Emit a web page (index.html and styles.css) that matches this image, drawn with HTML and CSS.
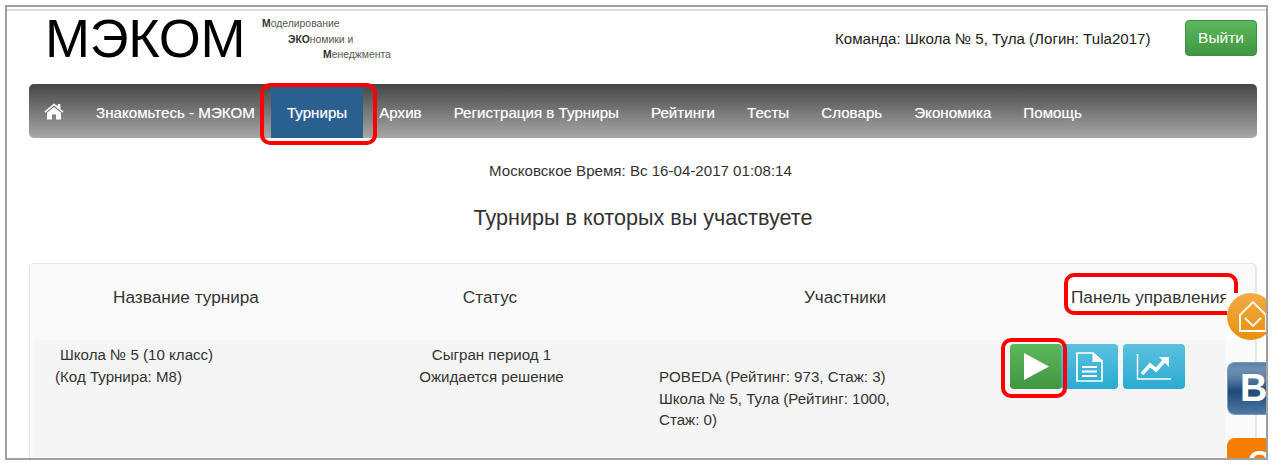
FILE: index.html
```html
<!DOCTYPE html>
<html lang="ru">
<head>
<meta charset="utf-8">
<title>МЭКОМ — Турниры</title>
<link rel="stylesheet" href="styles.css">
</head>
<body>
<div class="frame">
  <div class="page">
    <header class="top">
      <div class="logo">МЭКОМ</div>
      <div class="tagline">
        <div class="tag1"><b>М</b>оделирование</div>
        <div class="tag2"><b>ЭКО</b>номики и</div>
        <div class="tag3"><b>М</b>енеджмента</div>
      </div>
      <div class="team">Команда: Школа № 5, Тула (Логин: Tula2017)</div>
      <a class="logout">Выйти</a>
    </header>
    <nav class="nav">
      <a class="home" aria-label="Главная">
        <svg width="20" height="18" viewBox="0 0 20 18"><path fill="#fff" d="M10 1.500 0.400 9.600l1 1.200L10 3.600l8.600 7.200 1-1.200-3.200-2.700V2h-2.600v2.200z"/><path fill="#fff" d="M10 5 3 10.800V17.400h5v-5h4v5h5V10.800z"/></svg>
      </a>
      <a class="item">Знакомьтесь - МЭКОМ</a>
      <a class="item active">Турниры</a>
      <a class="item">Архив</a>
      <a class="item">Регистрация в Турниры</a>
      <a class="item">Рейтинги</a>
      <a class="item">Тесты</a>
      <a class="item">Словарь</a>
      <a class="item">Экономика</a>
      <a class="item">Помощь</a>
    </nav>
    <p class="clock">Московское Время: Вс 16-04-2017 01:08:14</p>
    <h1 class="title">Турниры в которых вы участвуете</h1>
    <section class="panel">
      <div class="table">
        <div class="thead">
          <div class="th c1">Название турнира</div>
          <div class="th c2">Статус</div>
          <div class="th c3">Участники</div>
          <div class="th c4"><span class="th-text">Панель управления</span></div>
        </div>
        <div class="tbody">
          <div class="td c1">
            <div class="name">Школа № 5 (10 класс)</div>
            <div class="code">(Код Турнира: М8)</div>
          </div>
          <div class="td c2">Сыгран период 1<br>Ожидается решение</div>
          <div class="td c3 members">POBEDA (Рейтинг: 973, Стаж: 3)<br>Школа № 5, Тула (Рейтинг: 1000, Стаж: 0)</div>
          <div class="td c4 actions">
            <button class="btn green" aria-label="Играть">
              <svg width="25" height="27" viewBox="0 0 25 27"><path fill="#fff" d="M0 0 25 13.500 0 27z"/></svg>
            </button>
            <button class="btn blue doc" aria-label="Отчёт">
              <svg width="27" height="30" viewBox="0 0 27 30" fill="none" stroke="#fff" stroke-width="1.700"><path d="M1 1h16l9 8v20H1z"/><path fill="#fff" stroke="none" d="M16.500 1.500v8.500h9z"/><path stroke-width="1.800" d="M6 15h15M6 19.500h15M6 24h15"/></svg>
            </button>
            <button class="btn blue chart" aria-label="График">
              <svg width="36" height="26" viewBox="0 0 36 26" fill="none" stroke="#fff"><path stroke-width="1.500" d="M1.500 0v25H35"/><path stroke-width="3.600" d="M6 20l8-9 6 5 8-9"/><path fill="#fff" stroke="none" d="M23 3h10v10z"/></svg>
            </button>
          </div>
        </div>
      </div>
    </section>
  </div>

  <span class="mark mark-nav"></span>
  <span class="mark mark-head"></span>
  <span class="mark mark-play"></span>

  <div class="social mail">
    <svg width="40" height="47" viewBox="0 0 40 47"><defs><linearGradient id="mailfill" x1="0" y1="0" x2="0" y2="1"><stop offset="0" stop-color="#f3ab45"/><stop offset="1" stop-color="#e8900f"/></linearGradient></defs><circle cx="23.500" cy="23.500" r="23.500" fill="url(#mailfill)"/><g fill="none" stroke="#fff" stroke-width="1.800"><path d="M13 22 26 9 39 22V38H13z"/><path d="M18 25l8 8 8-8"/></g></svg>
  </div>
  <div class="social vk"><span>В</span></div>
  <div class="social ok"><span>О</span></div>
</div>
</body>
</html>
```
FILE: styles.css
```css
* { box-sizing: border-box; }
html, body { margin: 0; height: 100%; background: #fff; overflow: hidden; }
body {
  padding: 5px 7px 6px 5px;
  font-family: "Liberation Sans", Arial, sans-serif;
  font-size: 15px;
  color: #333;
}
.frame {
  position: relative;
  width: 1263px;
  height: 455px;
  border: 2px solid #a0a0a0;
  overflow: hidden;
}
.page { border-top: 2px solid #dcdcdc; margin-top: 2px; height: 100%; }

.top { display: flex; align-items: flex-start; height: 73px; }
.logo {
  margin: 0 0 0 38px;
  width: 217px;
  font-size: 54px;
  line-height: 50px;
  letter-spacing: -0.300px;
  padding-top: 2px;
  color: #000;
}
.tagline { font-size: 10.400px; line-height: 15.500px; color: #555; padding-top: 5px; width: 300px; }
.tagline b { color: #333; }
.tag2 { padding-left: 26px; }
.tag3 { padding-left: 61px; }
.team { margin-left: 273px; padding-top: 19px; font-size: 15.100px; line-height: 18px; color: #222; width: 350px; white-space: nowrap; }
.logout {
  margin-top: 9px;
  width: 72px;
  height: 36px;
  line-height: 34px;
  text-align: center;
  border-radius: 4px;
  border: 1px solid #3e8f3e;
  background: linear-gradient(#5cb85c, #419641);
  color: #fff;
  font-size: 15.500px;
}

.nav {
  display: flex;
  margin: 0 9px 0 22px;
  height: 54px;
  border-radius: 5px;
  background: linear-gradient(#454545, #a8a8a8);
  color: #fff;
}
.home { display: flex; align-items: center; padding: 0 32px 0 15px; }
.item {
  padding: 20px 16px 0;
  font-size: 15.150px;
  line-height: 18px;
  white-space: nowrap;
  text-shadow: 0 0 1px rgba(255,255,255,.5);
}
.home + .item { padding-left: 0; }
.active {
  margin-top: 3px;
  padding-top: 17px;
  background: #2a6090;
}

.clock { margin: 24px 0 0; text-align: center; font-size: 15.100px; line-height: 18px; padding-left: 8px; }
.title { margin: 26px 0 0; text-align: center; font-weight: 400; font-size: 21.600px; line-height: 24px; color: #333; padding-left: 13px; }

.panel {
  margin: 33px 9px 0 22px;
  height: 200px;
  padding-left: 3px;
  border: 1px solid #e6e6e6;
  border-right-width: 2px;
  border-radius: 5px 5px 0 0;
  background: #fafafa;
}
.table { width: 1193px; }
.thead, .tbody { display: grid; grid-template-columns: 306px 302px 408px 177px; }
.thead { height: 76px; }
.th { padding-top: 22px; font-size: 17.200px; line-height: 22px; text-align: center; }
.th.c4 { overflow: hidden; text-align: left; padding-left: 22px; white-space: nowrap; }
.th-text { position: relative; z-index: 2; }
.tbody { background: #f5f5f5; height: 130px; }
.td { padding-top: 4px; line-height: 22px; font-size: 15.100px; }
.name { padding-left: 27px; }
.code { padding-left: 22px; }
.td.c2 { text-align: center; padding-left: 3px; }
.members { padding: 26px 150px 0 18px; line-height: 21.500px; }
.actions { display: flex; align-items: flex-start; padding: 4px 0 0 0; margin-left: -39px; position: relative; }

.btn {
  display: flex;
  align-items: center;
  justify-content: center;
  height: 45px;
  padding: 0;
  border: 0;
  border-radius: 4px;
}
.green { width: 52px; background: linear-gradient(#5cb85c, #419641); }
.doc { width: 57px; margin-right: 5px; margin-left: -1px; }
.chart { width: 62px; }
.blue { background: linear-gradient(#5bc0de, #2aabd2); }

.mark { position: absolute; border: 4px solid #f00; border-radius: 10px; z-index: 1; }
.mark-nav { left: 253px; top: 76px; width: 117px; height: 62px; }
.mark-head { left: 1057px; top: 266px; width: 174px; height: 42px; background: #fff; }
.mark-play { left: 994px; top: 331px; width: 66px; height: 60px; z-index: 3; }

.social { position: absolute; overflow: hidden; z-index: 4; }
.mail { left: 1220px; top: 286px; width: 40px; height: 47px; background: #fff; }
.mail svg { display: block; }
.vk {
  left: 1220px; top: 355px; width: 40px; height: 53px;
  border-radius: 8px 0 0 8px;
  background: linear-gradient(#5a80a8 0, #6d8fb3 12%, #5a7ea3 30%, #1e4a78 55%, #4f79a4 100%);
  border: 1px solid #7a9ab8;
  border-right: 0;
  color: #fff;
  font-weight: 700;
  font-size: 38px;
  line-height: 51px;
  padding-left: 12px;
}
.ok {
  left: 1220px; top: 431px; width: 40px; height: 24px;
  border-radius: 8px 0 0 0;
  background: #f57d00;
  color: #fff;
  font-weight: 700;
  font-size: 30px;
  line-height: 34px;
  padding: 6px 0 0 21px;
}
```
